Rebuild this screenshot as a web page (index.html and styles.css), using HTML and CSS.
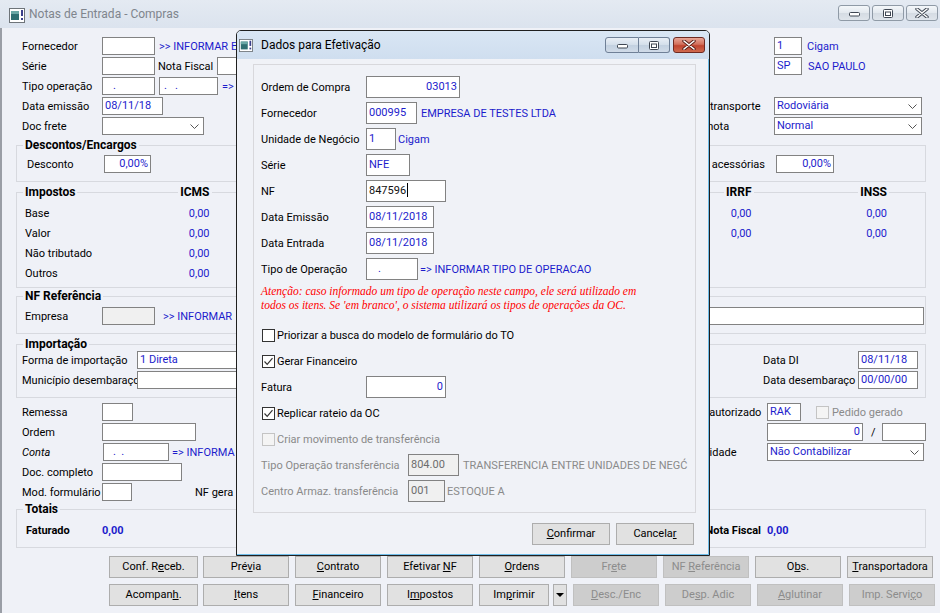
FILE: index.html
```html
<!DOCTYPE html>
<html lang="pt-BR">
<head>
<meta charset="utf-8">
<title>Notas de Entrada - Compras</title>
<link rel="stylesheet" href="styles.css">
</head>
<body>
<div class="win">
  <div class="tb">
    <svg class="appico" width="16" height="15" viewBox="0 0 16 15"><rect x="0.5" y="0.5" width="15" height="14" fill="#fff" stroke="#6e7479"/><rect x="2" y="3" width="8" height="9" fill="#2f6f72"/><rect x="2" y="3" width="8" height="3" fill="#6aa8a6"/><rect x="12" y="2" width="2" height="6" fill="#3a3f8a"/><rect x="12" y="10" width="2" height="2" fill="#3a3f8a"/></svg>
    <span class="tt">Notas de Entrada - Compras</span>
    <div class="wbtns">
      <span class="wb"><svg width="11" height="5" viewBox="0 0 11 5" class="imin"><rect x="0.5" y="0.5" width="10" height="3.5" rx="1" fill="#fff" stroke="#3f4753"/></svg></span>
      <span class="wb"><svg width="10" height="9" viewBox="0 0 10 9"><rect x="0.5" y="0.5" width="9" height="8" rx="1" fill="#fff" stroke="#3f4753"/><rect x="2.5" y="3" width="5" height="3.5" fill="#fff" stroke="#3f4753"/></svg></span>
      <span class="wb"><svg width="14" height="10" viewBox="0 0 14 10"><path d="M2 1 L12 9 M12 1 L2 9" stroke="#3f4753" stroke-width="3.4" stroke-linecap="round"/><path d="M2 1 L12 9 M12 1 L2 9" stroke="#fff" stroke-width="1.6" stroke-linecap="round"/></svg></span>
    </div>
  </div>

  <div class="client">
    <div class="top">
      <div class="row">
        <span class="lbl">Fornecedor</span><span class="in w53"></span><span class="lnk ml4">&gt;&gt; INFORMAR E</span>
        <div class="rt rtop"><span class="in w28">1</span><span class="lnk ml5">Cigam</span></div>
      </div>
      <div class="row">
        <span class="lbl">Série</span><span class="in w53"></span><span class="ml3">Nota Fiscal</span><span class="in w22 ml4"></span>
        <div class="rt rtop"><span class="in w28">SP</span><span class="lnk ml6">SAO PAULO</span></div>
      </div>
      <div class="row">
        <span class="lbl">Tipo operação</span><span class="in w53 pdot">.</span><span class="in w59 ml4 pdot2">.&nbsp;&nbsp;&nbsp;.</span><span class="lnk ml4">=&gt;</span>
      </div>
      <div class="row">
        <span class="lbl">Data emissão</span><span class="in w61">08/11/18</span>
        <div class="rt rsel"><span class="rl">Meio de transporte</span><span class="in sel w148">Rodoviária<svg class="chev" width="9" height="5" viewBox="0 0 9 5"><path d="M0.5 0.5 L4.5 4.5 L8.5 0.5" fill="none" stroke="#555"/></svg></span></div>
      </div>
      <div class="row">
        <span class="lbl">Doc frete</span><span class="in sel w102"><svg class="chev" width="9" height="5" viewBox="0 0 9 5"><path d="M0.5 0.5 L4.5 4.5 L8.5 0.5" fill="none" stroke="#555"/></svg></span>
        <div class="rt rsel"><span class="rl">Tipo de nota</span><span class="in sel w148">Normal<svg class="chev" width="9" height="5" viewBox="0 0 9 5"><path d="M0.5 0.5 L4.5 4.5 L8.5 0.5" fill="none" stroke="#555"/></svg></span></div>
      </div>
    </div>

    <div class="grp g-desc">
      <div class="gh"><b>Descontos/Encargos</b></div>
      <div class="row mt1">
        <span class="lbl ld">Desconto</span><span class="in num w47">0,00%</span>
        <div class="rt rdesp"><span>Despesas acessórias</span><span class="in num w58 ml11">0,00%</span></div>
      </div>
    </div>

    <div class="grp g-imp">
      <div class="igrid ih">
        <div class="c0"><b>Impostos</b></div>
        <div class="c"><b>ICMS</b></div>
        <div class="c"></div>
        <div class="c"></div>
        <div class="c"></div>
        <div class="c"><b>IRRF</b></div>
        <div class="c"><b>INSS</b></div>
      </div>
      <div class="igrid ir">
        <div class="c0">Base</div><div class="c">0,00</div><div class="c"></div><div class="c"></div><div class="c"></div><div class="c">0,00</div><div class="c">0,00</div>
        <div class="c0">Valor</div><div class="c">0,00</div><div class="c"></div><div class="c"></div><div class="c"></div><div class="c">0,00</div><div class="c">0,00</div>
        <div class="c0">Não tributado</div><div class="c">0,00</div><div class="c"></div><div class="c"></div><div class="c"></div><div class="c"></div><div class="c"></div>
        <div class="c0">Outros</div><div class="c">0,00</div><div class="c"></div><div class="c"></div><div class="c"></div><div class="c"></div><div class="c"></div>
      </div>
    </div>

    <div class="grp g-ref">
      <div class="gh"><b>NF Referência</b></div>
      <div class="row mt2">
        <span class="lbl le">Empresa</span><span class="in dis w53"></span><span class="lnk ml8">&gt;&gt; INFORMAR</span>
        <span class="in wide"></span>
      </div>
    </div>

    <div class="grp g-imp2">
      <div class="gh"><b>Importação</b></div>
      <div class="row mtm2">
        <span class="lbl li">Forma de importação</span><span class="in sel w250">1 Direta</span>
        <div class="rt rdi"><span class="rl2">Data DI</span><span class="in w60">08/11/18</span></div>
      </div>
      <div class="row">
        <span class="lbl li">Município desembaraço</span><span class="in w250"></span>
        <div class="rt rdi"><span class="rl2">Data desembaraço</span><span class="in w60">00/00/00</span></div>
      </div>
    </div>

    <div class="mid">
      <div class="row">
        <span class="lbl">Remessa</span><span class="in w31"></span>
        <div class="rt rmid"><span class="rl3">Usuário autorizado</span><span class="in w34">RAK</span><span class="cb cbdis ml15"></span><span class="gray ml3">Pedido gerado</span></div>
      </div>
      <div class="row">
        <span class="lbl">Ordem</span><span class="in w94"></span>
        <div class="rt rmid"><span class="rl3"></span><span class="in num w96">0</span><span class="ml8">/</span><span class="in w44 ml6"></span></div>
      </div>
      <div class="row">
        <span class="lbl"><i>Conta</i></span><span class="in w66 ml1 pdot3">.&nbsp;&nbsp;.</span><span class="lnk ml3">=&gt; INFORMA</span>
        <div class="rt rmid"><span class="rl3">Contabilidade</span><span class="in sel w157">Não Contabilizar<svg class="chev" width="9" height="5" viewBox="0 0 9 5"><path d="M0.5 0.5 L4.5 4.5 L8.5 0.5" fill="none" stroke="#555"/></svg></span></div>
      </div>
      <div class="row">
        <span class="lbl">Doc. completo</span><span class="in w80"></span>
      </div>
      <div class="row">
        <span class="lbl">Mod. formulário</span><span class="in w30"></span><span class="ml63">NF gera</span>
      </div>
    </div>

    <div class="grp g-tot">
      <div class="gh"><b>Totais</b></div>
      <div class="row mt3">
        <span class="lbl lt"><b>Faturado</b></span><b class="lnk">0,00</b>
        <div class="rt rtot"><b class="rl4">Total Nota Fiscal</b><b class="lnk ml6">0,00</b></div>
      </div>
    </div>

    <div class="btns">
      <span class="btn first">Conf. R<u>e</u>ceb.</span>
      <span class="btn">Pré<u>v</u>ia</span>
      <span class="btn"><u>C</u>ontrato</span>
      <span class="btn">Efetivar <u>N</u>F</span>
      <span class="btn"><u>O</u>rdens</span>
      <span class="btn off">Fr<u>e</u>te</span>
      <span class="btn off">NF <u>R</u>eferência</span>
      <span class="btn">O<u>b</u>s.</span>
      <span class="btn"><u>T</u>ransportadora</span>
    </div>
    <div class="btns r2">
      <span class="btn first">Acompan<u>h</u>.</span>
      <span class="btn"><u>I</u>tens</span>
      <span class="btn"><u>F</u>inanceiro</span>
      <span class="btn">I<u>m</u>postos</span>
      <span class="btn imp">Im<u>p</u>rimir</span><span class="btn dd"><svg width="8" height="4" viewBox="0 0 8 4"><path d="M0 0 H8 L4 4 Z" fill="#000"/></svg></span>
      <span class="btn off"><u>D</u>esc./Enc</span>
      <span class="btn off">De<u>s</u>p. Adic</span>
      <span class="btn off"><u>A</u>glutinar</span>
      <span class="btn off">Imp. Servi<u>ç</u>o</span>
    </div>
  </div>

  <div class="dlg">
    <div class="dtb">
      <svg class="dico" width="14" height="13" viewBox="0 0 16 15"><rect x="0.5" y="0.5" width="15" height="14" fill="#fff" stroke="#6e7479"/><rect x="2" y="3" width="8" height="9" fill="#2f6f72"/><rect x="2" y="3" width="8" height="3" fill="#6aa8a6"/><rect x="12" y="2" width="2" height="6" fill="#3a3f8a"/><rect x="12" y="10" width="2" height="2" fill="#3a3f8a"/></svg>
      <span class="dtt">Dados para Efetivação</span>
      <div class="dwb">
        <span class="db dmin"><svg width="11" height="5" viewBox="0 0 11 5" class="imin"><rect x="0.5" y="0.5" width="10" height="3.5" rx="1" fill="#fff" stroke="#3f4753"/></svg></span>
        <span class="db dmax"><svg width="10" height="9" viewBox="0 0 10 9"><rect x="0.5" y="0.5" width="9" height="8" rx="1" fill="#fff" stroke="#3f4753"/><rect x="2.5" y="3" width="5" height="3.5" fill="#fff" stroke="#3f4753"/></svg></span>
        <span class="db dcls"><svg width="14" height="10" viewBox="0 0 14 10"><path d="M2 1 L12 9 M12 1 L2 9" stroke="#5a2018" stroke-width="3.4" stroke-linecap="round"/><path d="M2 1 L12 9 M12 1 L2 9" stroke="#fff" stroke-width="1.6" stroke-linecap="round"/></svg></span>
      </div>
    </div>
    <div class="dgrp">
      <div class="drow"><span class="dl">Ordem de Compra</span><span class="in num w94">03013</span></div>
      <div class="drow"><span class="dl">Fornecedor</span><span class="in w51">000995</span><span class="lnk ml4">EMPRESA DE TESTES LTDA</span></div>
      <div class="drow"><span class="dl">Unidade de Negócio</span><span class="in w30">1</span><span class="lnk ml2">Cigam</span></div>
      <div class="drow"><span class="dl">Série</span><span class="in w44">NFE</span></div>
      <div class="drow"><span class="dl">NF</span><span class="in w80 blk">847596<i class="caret"></i></span></div>
      <div class="drow"><span class="dl">Data Emissão</span><span class="in w68">08/11/2018</span></div>
      <div class="drow"><span class="dl">Data Entrada</span><span class="in w68">08/11/2018</span></div>
      <div class="drow"><span class="dl">Tipo de Operação</span><span class="in w52 pdotd">.</span><span class="lnk ml2">=&gt; INFORMAR TIPO DE OPERACAO</span></div>
      <p class="warn">Atenção: caso informado um tipo de operação neste campo, ele será utilizado em<br>todos os itens. Se 'em branco', o sistema utilizará os tipos de operações da OC.</p>
      <div class="drow"><span class="cb dcb"></span><span class="ml2">Priorizar a busca do modelo de formulário do TO</span></div>
      <div class="drow"><span class="cb dcb on"><svg width="11" height="11" viewBox="0 0 11 11"><path d="M1.5 5.5 L4.2 8.3 L9.5 2.2" fill="none" stroke="#333" stroke-width="1.2"/></svg></span><span class="ml2">Gerar Financeiro</span></div>
      <div class="drow"><span class="dl">Fatura</span><span class="in num w80">0</span></div>
      <div class="drow"><span class="cb dcb on"><svg width="11" height="11" viewBox="0 0 11 11"><path d="M1.5 5.5 L4.2 8.3 L9.5 2.2" fill="none" stroke="#333" stroke-width="1.2"/></svg></span><span class="ml2">Replicar rateio da OC</span></div>
      <div class="drow gray"><span class="cb dcb cbdis"></span><span class="ml2">Criar movimento de transferência</span></div>
      <div class="drow gray"><span class="dl dlw">Tipo Operação transferência</span><span class="in dis w51">804.00</span><span class="ml4">TRANSFERENCIA ENTRE UNIDADES DE NEGĆ</span></div>
      <div class="drow gray"><span class="dl dlw">Centro Armaz. transferência</span><span class="in dis w37">001</span><span class="ml2">ESTOQUE A</span></div>
    </div>
    <div class="dbtns">
      <span class="btn dbtn"><u>C</u>onfirmar</span>
      <span class="btn dbtn">Cancela<u>r</u></span>
    </div>
  </div>
</div>
</body>
</html>
```

FILE: styles.css
```css
html, body { margin: 0; padding: 0; }
body {
  font-family: Roboto, "Liberation Sans", sans-serif;
  font-size: 11px;
  color: #000;
  background: #eff1f7;
}
.win {
  position: relative;
  width: 940px;
  height: 613px;
  overflow: hidden;
  background: #eff1f7;
  box-shadow: inset 2px 0 0 #9a9ea6;
}
/* title bar */
.tb {
  height: 28px;
  display: flex;
  align-items: flex-start;
  background: linear-gradient(#e4eaf2, #dbe3ee);
}
.appico { margin: 8px 0 0 9px; flex: none; }
.tt {
  margin: 6px 0 0 4px;
  font-size: 12px;
  color: #7f858d;
  line-height: 16px;
}
.wbtns { margin-left: auto; margin-right: 2px; margin-top: 5px; display: flex; gap: 2px; }
.wb {
  box-sizing: border-box;
  width: 32px; height: 16px;
  border: 1px solid #8f9aa6;
  border-radius: 3px;
  background: linear-gradient(#f4f7fa, #e2e8ee 50%, #d4dbe3 51%, #dfe5eb);
  display: flex; align-items: center; justify-content: center;
}
.imin { margin-top: 3px; }

.client { padding: 8px 14px 0 16px; }
.row { display: flex; align-items: center; height: 20px; white-space: nowrap; }
.lbl { box-sizing: border-box; width: 86px; padding-left: 6px; flex: none; }
.in {
  box-sizing: border-box;
  display: inline-block;
  flex: none;
  height: 18px;
  border: 1px solid #828282;
  background: #fff;
  color: #1c1ccc;
  padding: 0 2px;
  line-height: 16px;
  white-space: nowrap;
  overflow: hidden;
}
.num { text-align: right; }
.sel { display: inline-flex; align-items: center; justify-content: space-between; padding: 0 4px 0 2px; }
.sel .chev { margin-left: auto; flex: none; }
.dis { background: #f0f0f0; color: #6d6d6d; }
.lnk { color: #1c1ccc; }
.gray { color: #8a8a8a; }

.w22 { width: 22px; }
.w28 { width: 28px; } .w30 { width: 30px; } .w31 { width: 31px; } .w34 { width: 34px; }
.w37 { width: 37px; } .w44 { width: 44px; } .w47 { width: 47px; } .w51 { width: 51px; }
.w52 { width: 52px; } .w53 { width: 53px; } .w58 { width: 58px; } .w59 { width: 59px; }
.w60 { width: 60px; } .w61 { width: 61px; } .w66 { width: 66px; } .w68 { width: 68px; }
.w80 { width: 80px; } .w94 { width: 94px; } .w96 { width: 96px; } .w102 { width: 102px; }
.w148 { width: 148px; } .w157 { width: 157px; } .w250 { width: 250px; }
.ml1 { margin-left: 1px; } .ml2 { margin-left: 2px; } .ml3 { margin-left: 3px; } .ml4 { margin-left: 4px; }
.ml5 { margin-left: 5px; } .ml6 { margin-left: 6px; } .ml8 { margin-left: 8px; } .ml11 { margin-left: 11px; }
.ml15 { margin-left: 15px; } .ml63 { margin-left: 63px; }
.pdot { padding-left: 10px; }
.pdot2 { padding-left: 4px; }
.pdot3 { padding-left: 9px; }

.rt { margin-left: auto; display: flex; align-items: center; flex: none; }
.rtop { width: 152px; }
.rsel { width: 258px; }
.rl { width: 106px; flex: none; }
.rdesp { margin-right: 91px; }
.rdi { margin-right: 7px; }
.rl2 { width: 95px; flex: none; }
.rmid { width: 257px; }
.rl3 { width: 98px; flex: none; }
.rtot { width: 264px; }
.rl4 { width: 100px; text-align: right; flex: none; }

/* group boxes */
.grp { border: 1px solid #d7d9df; }
.gh { display: flex; height: 15px; line-height: 15px; margin-top: -8px; padding-left: 6px; }
.gh b, .ih b { background: #eff1f7; padding: 0 2px; font-size: 12px; font-weight: bold; }
.g-desc { margin-top: 9px; padding-bottom: 7px; }
.mt1 { margin-top: 1px; }
.ld { width: 87px; padding-left: 10px; }
.g-imp { margin-top: 10px; padding-bottom: 3px; }
.igrid { display: grid; grid-template-columns: 95px repeat(6, 1fr); }
.ih { margin-top: -8px; height: 15px; line-height: 15px; }
.ih .c0 { padding-left: 6px; }
.ih .c { text-align: right; padding-right: 36px; }
.ir { margin-top: 4px; grid-auto-rows: 20px; line-height: 20px; }
.ir .c0 { padding-left: 8px; }
.ir .c { text-align: right; padding-right: 38px; color: #1c1ccc; }
.g-ref { margin-top: 8px; padding-bottom: 7px; }
.mt2 { margin-top: 2px; }
.le { width: 85px; padding-left: 8px; }
.wide { width: 400px; margin-left: auto; margin-right: 1px; }
.g-imp2 { margin-top: 10px; padding-bottom: 7px; }
.mtm2 { margin-top: -2px; }
.li { width: 120px; padding-left: 5px; }
.mid { margin-top: 4px; }
.g-tot { margin-top: 7px; padding-bottom: 7px; }
.mt3 { margin-top: 3px; }
.lt { width: 85px; padding-left: 9px; }

.cb {
  box-sizing: border-box;
  width: 13px; height: 13px;
  border: 1px solid #333;
  background: #fff;
  display: inline-flex; align-items: center; justify-content: center;
  flex: none;
}
.cbdis { border-color: #c4c4c4; background: #f4f4f4; }

/* buttons */
.btns { display: flex; gap: 6px; padding-left: 93px; margin-top: 8px; }
.btns.r2 { margin-top: 6px; }
.btn {
  box-sizing: border-box;
  width: 86px; height: 22px;
  border: 1px solid #adadad;
  background: #e1e1e1;
  font-size: 11px;
  line-height: 20px;
  text-align: center;
  white-space: nowrap;
  flex: none;
}
.btn.first { width: 89px; margin-right: -1px; }
.btn.off { background: #cdcdcd; border-color: #c0c0c0; color: #8c8c8c; }
.btn.imp { width: 70px; }
.btn.dd { width: 14px; margin-left: -2px; display: flex; align-items: center; justify-content: center; }

/* dialog */
.dlg {
  position: absolute;
  left: 236px; top: 30px;
  width: 474px; height: 526px;
  box-sizing: border-box;
  border: 1px solid #1f1f1f;
  border-radius: 5px 5px 0 0;
  background: #f0f2f7;
  box-shadow: inset -1px -1px 0 #6fbde9;
}
.dtb {
  height: 28px;
  display: flex;
  align-items: flex-start;
  background: linear-gradient(#d9e6f4, #cfdeef);
  border-radius: 4px 4px 0 0;
}
.dico { margin: 8px 0 0 2px; flex: none; }
.dtt { margin: 6px 0 0 8px; font-size: 12px; line-height: 16px; }
.dwb { margin-left: auto; margin-right: 4px; margin-top: 6px; display: flex; }
.db {
  box-sizing: border-box;
  height: 16px;
  border: 1px solid #6f8097;
  display: flex; align-items: center; justify-content: center;
  background: linear-gradient(#e9eff6, #d3deea 50%, #c2d0e0 51%, #d0dbe8);
}
.dmin { width: 34px; border-radius: 3px 0 0 3px; }
.dmax { width: 31px; border-left: none; border-radius: 0 3px 3px 0; }
.dcls {
  width: 32px; margin-left: 3px; border-radius: 3px;
  border-color: #6e2a22;
  background: linear-gradient(#e8a697, #d2705c 45%, #c04530 55%, #cf6a4f);
}
.dgrp {
  margin: 5px 13px 0 16px;
  border: 1px solid #d8d8dc;
  padding: 9px 0 8px;
}
.drow { display: flex; align-items: center; height: 26px; white-space: nowrap; padding-left: 8px; }
.dl { box-sizing: border-box; width: 112px; margin-left: -8px; padding-left: 7px; flex: none; }
.dlw { width: 154px; }
.drow .in { height: 22px; line-height: 20px; }
.blk { color: #111; position: relative; }
.caret { display: inline-block; width: 1px; height: 14px; background: #000; vertical-align: -3px; margin-left: 1px; }
.pdotd { padding-left: 11px; }
.warn {
  margin: 2px 0 10px;
  padding-left: 7px;
  font-family: "Liberation Serif", serif;
  font-style: italic;
  font-size: 11.5px;
  line-height: 14px;
  color: #f00;
  white-space: nowrap;
}
.dbtns { display: flex; justify-content: flex-end; gap: 6px; margin: 10px 15px 0 0; }
.dbtn { width: 78px; }
```
